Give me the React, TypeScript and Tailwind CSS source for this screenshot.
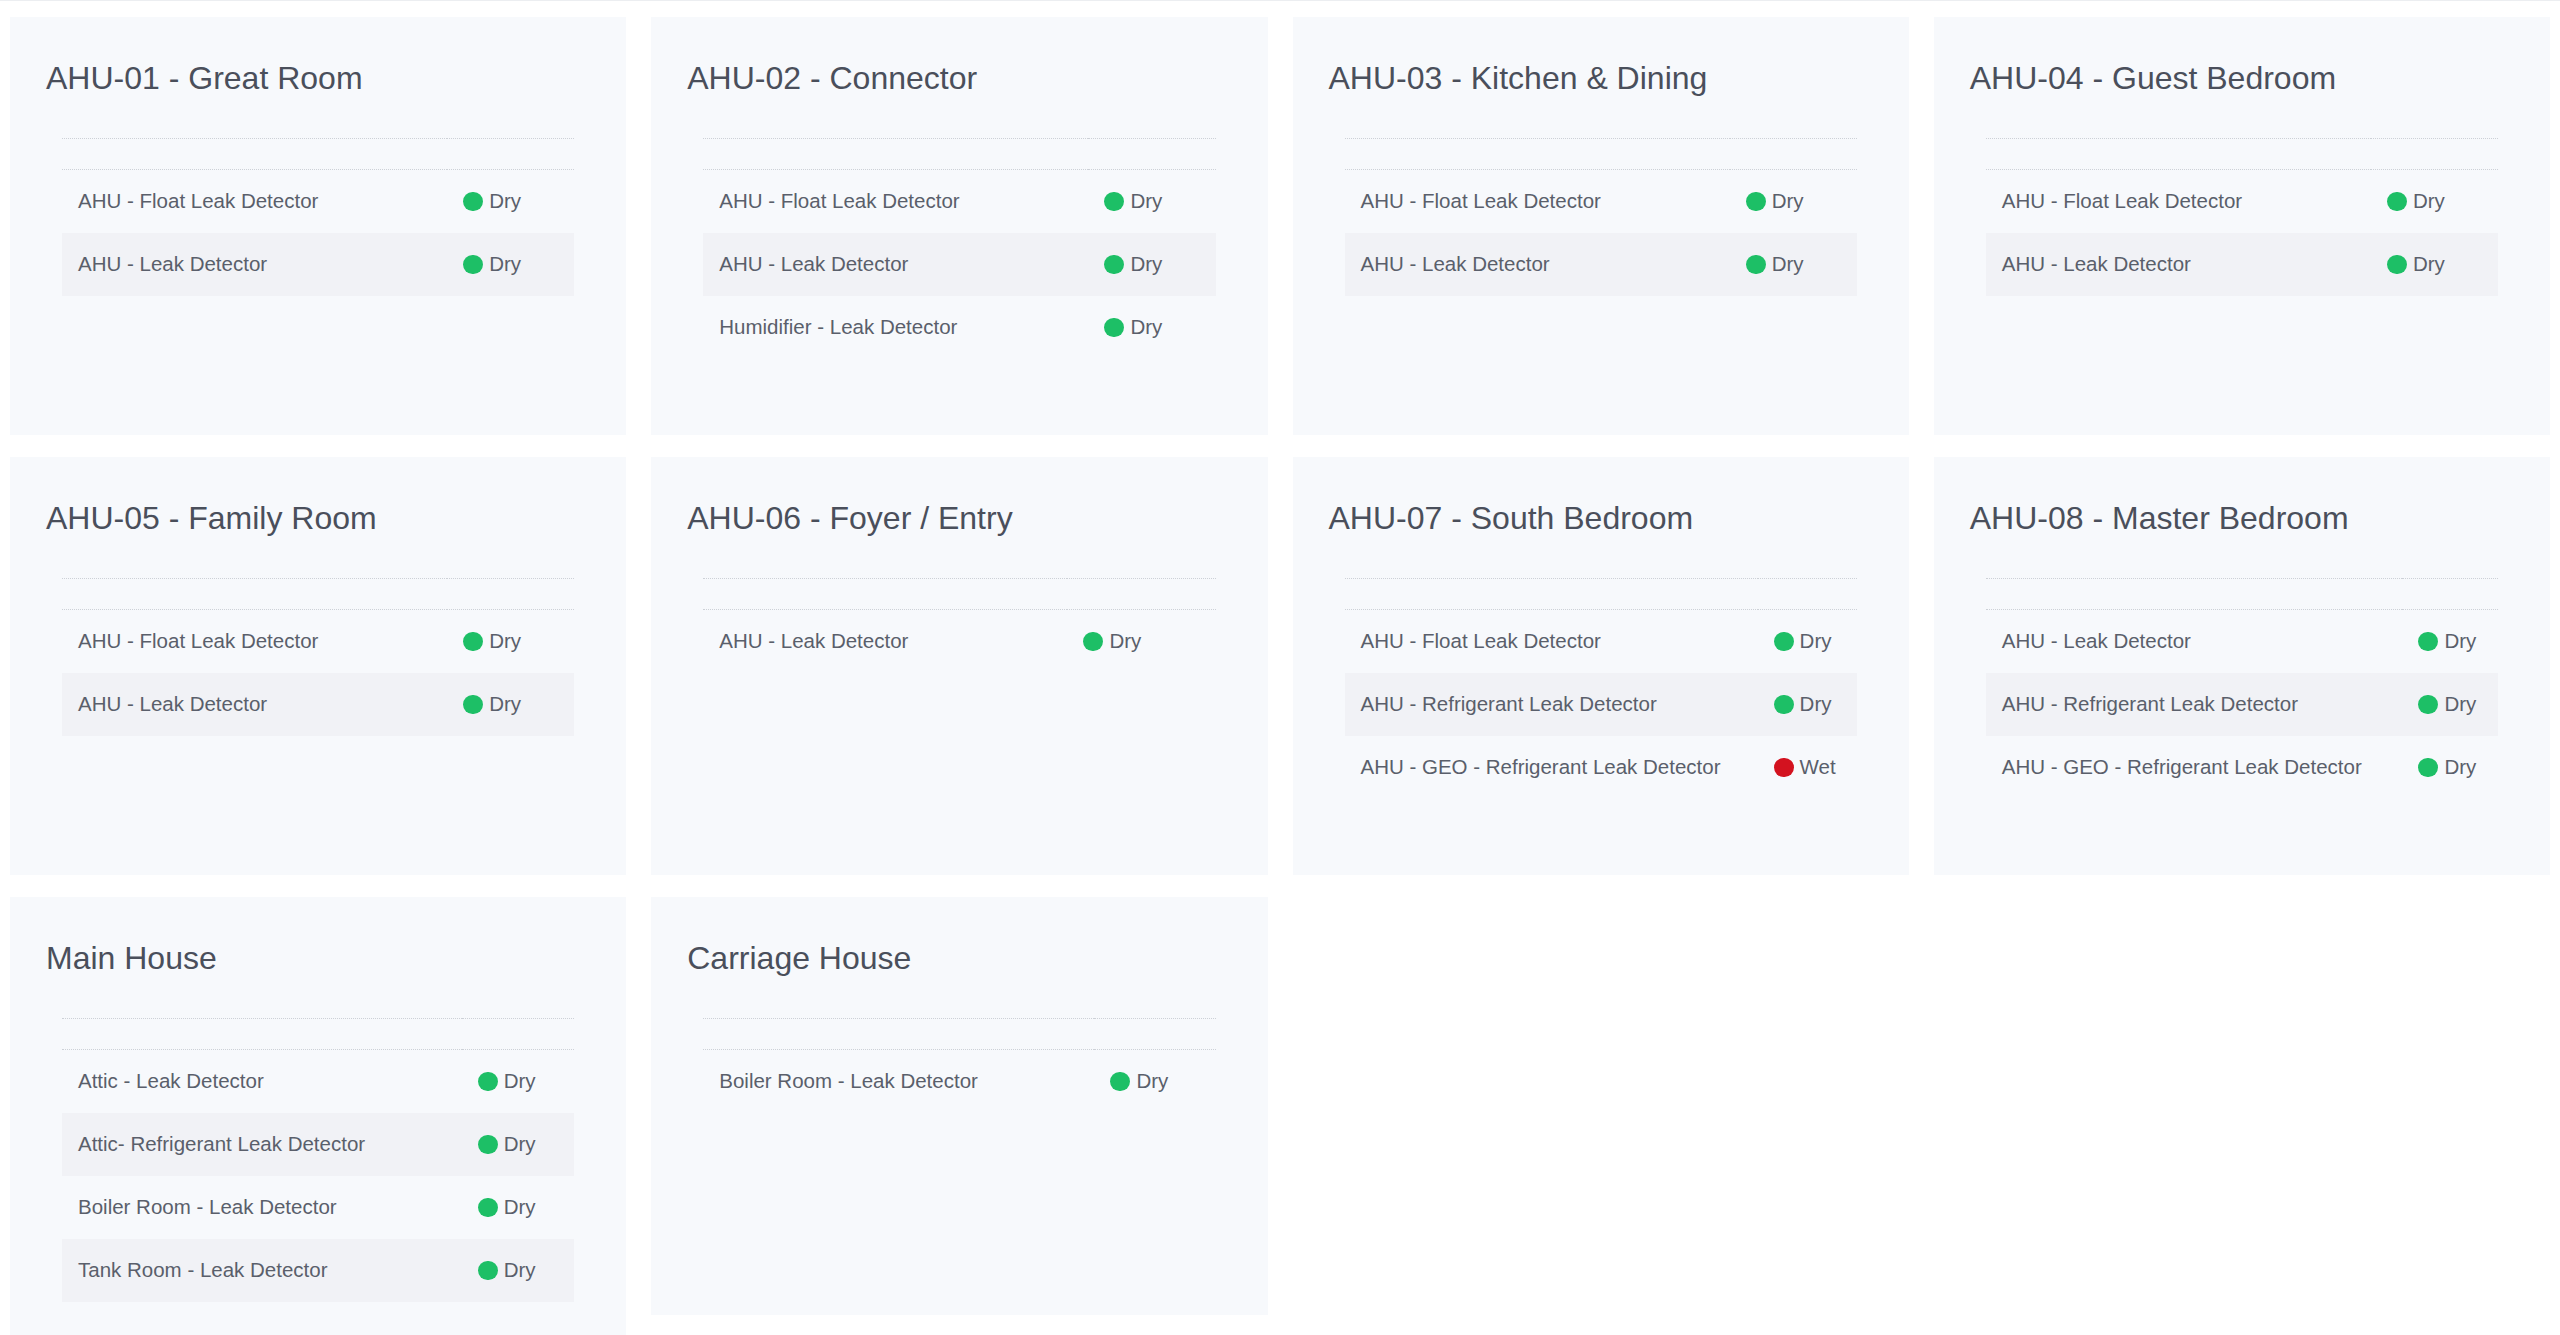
type Status = 'Dry' | 'Wet';

type Sensor = {
  name: string;
  status: Status;
};

type Zone = {
  title: string;
  sensors: Sensor[];
};

const zones: Zone[] = [
  {
    title: 'AHU-01 - Great Room',
    sensors: [
      { name: 'AHU - Float Leak Detector', status: 'Dry' },
      { name: 'AHU - Leak Detector', status: 'Dry' },
    ],
  },
  {
    title: 'AHU-02 - Connector',
    sensors: [
      { name: 'AHU - Float Leak Detector', status: 'Dry' },
      { name: 'AHU - Leak Detector', status: 'Dry' },
      { name: 'Humidifier - Leak Detector', status: 'Dry' },
    ],
  },
  {
    title: 'AHU-03 - Kitchen & Dining',
    sensors: [
      { name: 'AHU - Float Leak Detector', status: 'Dry' },
      { name: 'AHU - Leak Detector', status: 'Dry' },
    ],
  },
  {
    title: 'AHU-04 - Guest Bedroom',
    sensors: [
      { name: 'AHU - Float Leak Detector', status: 'Dry' },
      { name: 'AHU - Leak Detector', status: 'Dry' },
    ],
  },
  {
    title: 'AHU-05 - Family Room',
    sensors: [
      { name: 'AHU - Float Leak Detector', status: 'Dry' },
      { name: 'AHU - Leak Detector', status: 'Dry' },
    ],
  },
  {
    title: 'AHU-06 - Foyer / Entry',
    sensors: [{ name: 'AHU - Leak Detector', status: 'Dry' }],
  },
  {
    title: 'AHU-07 - South Bedroom',
    sensors: [
      { name: 'AHU - Float Leak Detector', status: 'Dry' },
      { name: 'AHU - Refrigerant Leak Detector', status: 'Dry' },
      { name: 'AHU - GEO - Refrigerant Leak Detector', status: 'Wet' },
    ],
  },
  {
    title: 'AHU-08 - Master Bedroom',
    sensors: [
      { name: 'AHU - Leak Detector', status: 'Dry' },
      { name: 'AHU - Refrigerant Leak Detector', status: 'Dry' },
      { name: 'AHU - GEO - Refrigerant Leak Detector', status: 'Dry' },
    ],
  },
  {
    title: 'Main House',
    sensors: [
      { name: 'Attic - Leak Detector', status: 'Dry' },
      { name: 'Attic- Refrigerant Leak Detector', status: 'Dry' },
      { name: 'Boiler Room - Leak Detector', status: 'Dry' },
      { name: 'Tank Room - Leak Detector', status: 'Dry' },
    ],
  },
  {
    title: 'Carriage House',
    sensors: [{ name: 'Boiler Room - Leak Detector', status: 'Dry' }],
  },
];

function StatusCell({ status }: { status: Status }) {
  const dot = status === 'Wet' ? 'bg-[#d3121f]' : 'bg-[#1dbf66]';
  return (
    <div className="flex items-center gap-[6px]">
      <span className={`block shrink-0 w-5 h-[19px] rounded-full ${dot}`} />
      <span>{status}</span>
    </div>
  );
}

function ZoneCard({ zone }: { zone: Zone }) {
  return (
    <div className="min-h-[418px] bg-[#f7f9fc] pt-[43px] pb-[44px] px-[36px]">
      <h2 className="text-[32px] leading-[36px] font-normal text-[#4a4f5b]">
        {zone.title}
      </h2>

      <div className="mt-[42px] px-4">
        <table className="w-full text-[20.5px] text-[#5a5f6b]">
          <thead>
            <tr className="h-[31px] border-y border-dotted border-[#cdd1d7]">
              <th />
              <th />
            </tr>
          </thead>
          <tbody>
            {zone.sensors.map((s, i) => (
              <tr
                key={s.name}
                className={`h-[63px] ${i % 2 === 1 ? 'bg-[#f1f2f6]' : ''}`}
              >
                <td className="px-4 text-left align-middle whitespace-nowrap">
                  {s.name}
                </td>
                <td className="px-4 text-left align-middle whitespace-nowrap">
                  <StatusCell status={s.status} />
                </td>
              </tr>
            ))}
          </tbody>
        </table>
      </div>
    </div>
  );
}

export default function App() {
  return (
    <div
      className="min-h-screen bg-white border-t border-[#eceef1] px-[10px] pt-4 pb-6"
      style={{ fontFamily: '"Liberation Sans", Arial, sans-serif' }}
    >
      <div className="grid grid-cols-4 gap-x-[25px] gap-y-[22px] items-start">
        {zones.map((z) => (
          <ZoneCard key={z.title} zone={z} />
        ))}
      </div>
    </div>
  );
}
